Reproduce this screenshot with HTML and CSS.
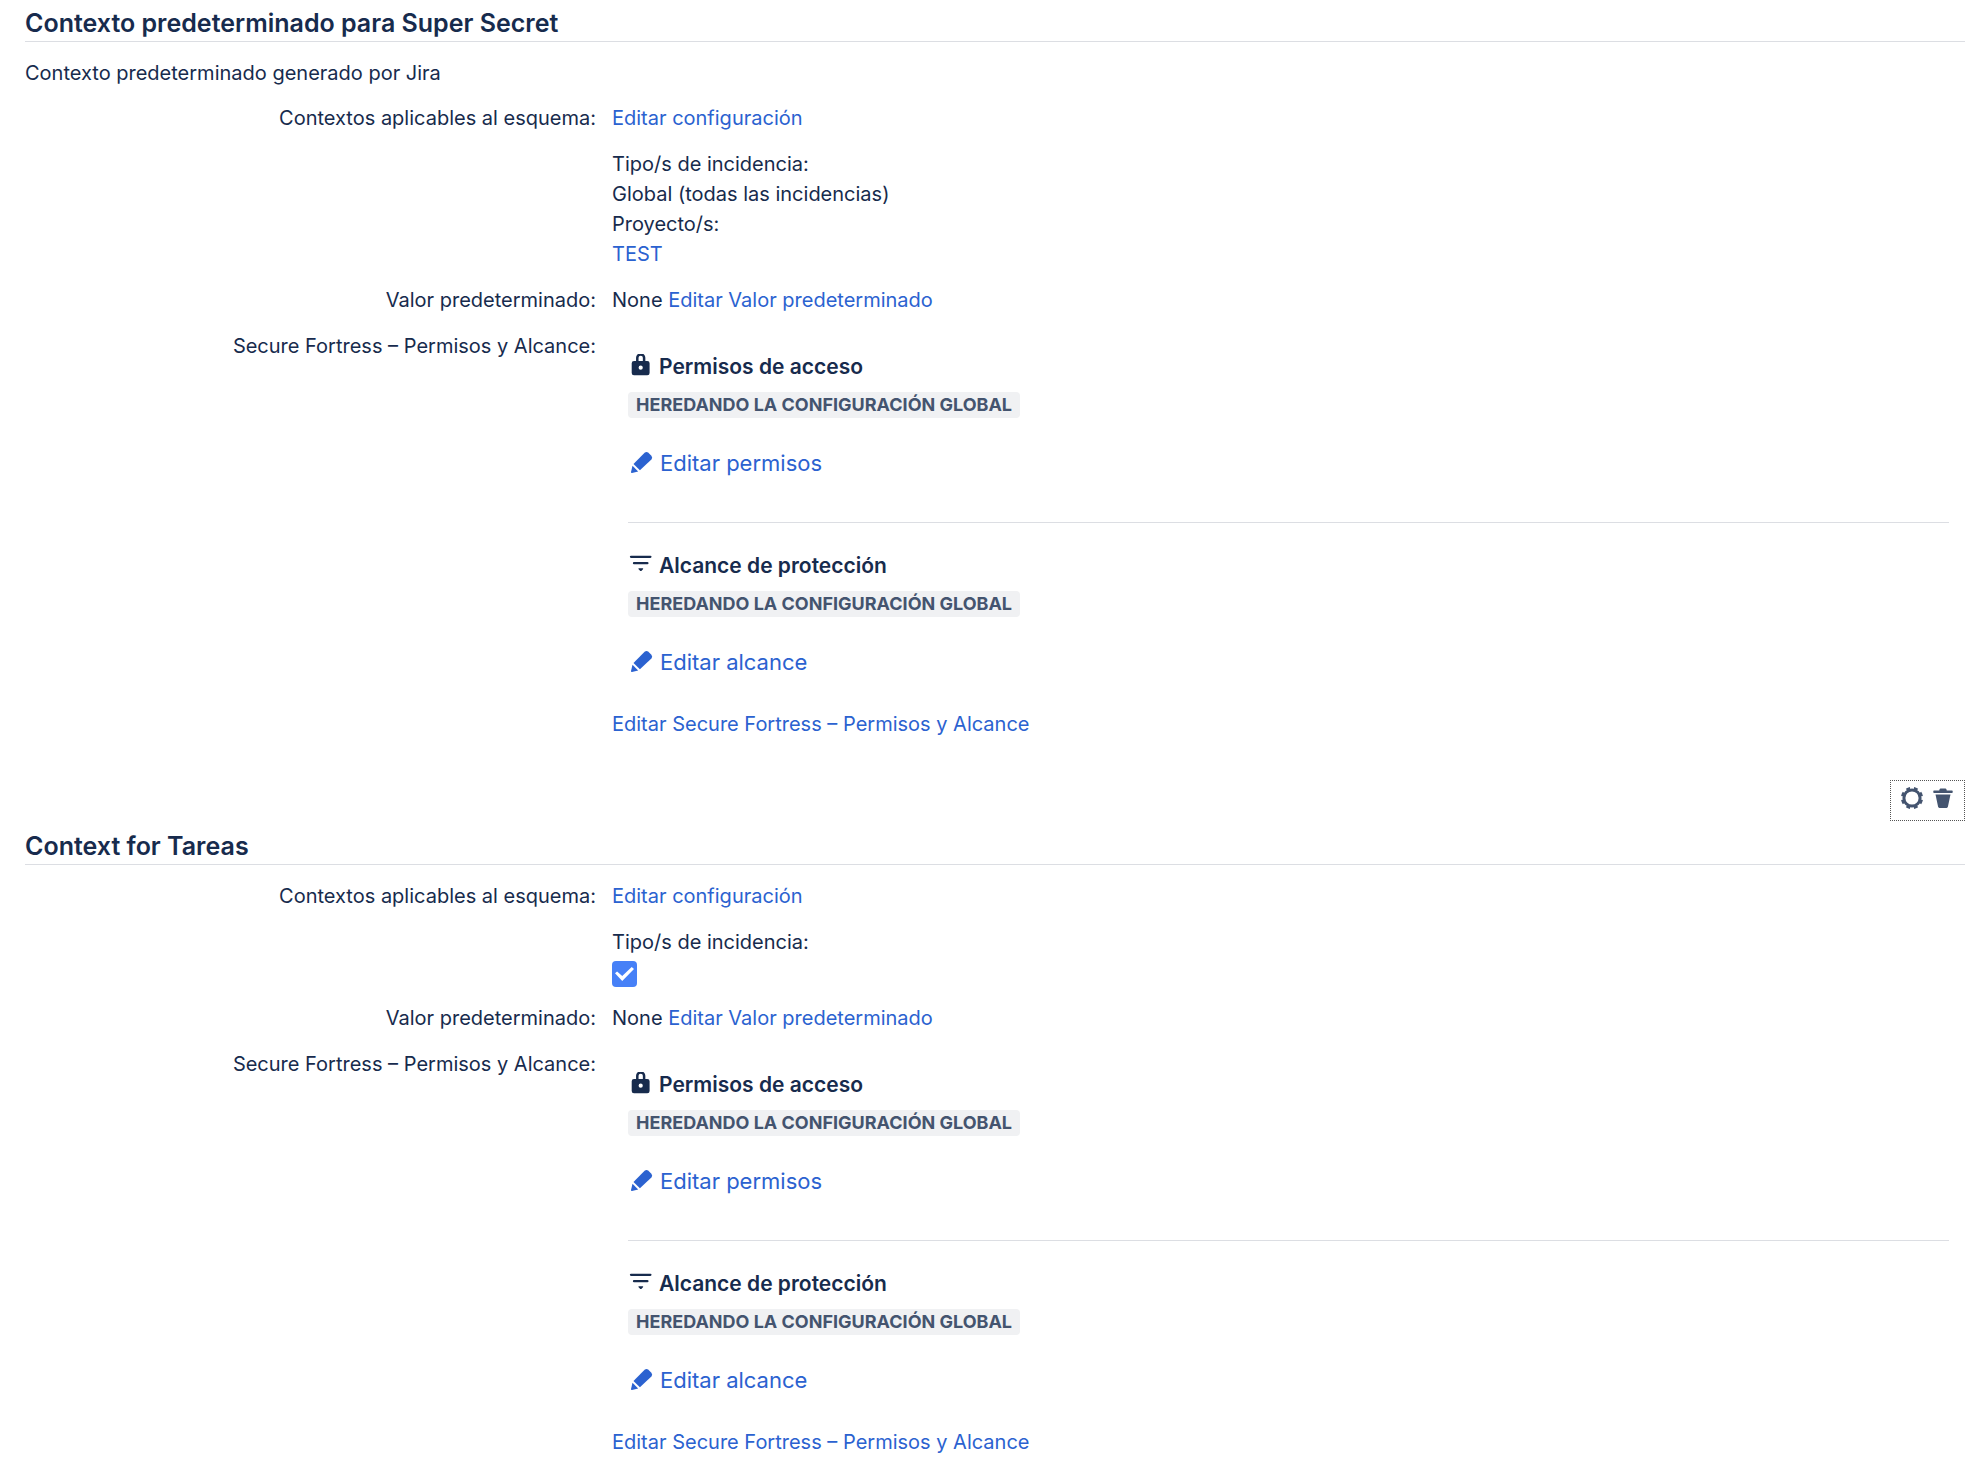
FILE: index.html
```html
<!DOCTYPE html>
<html lang="es">
<head>
    <title>Configurar campo personalizado</title>
    <meta charset="utf-8">
    <link rel="stylesheet" href="styles.css">
</head>
<body>
    <!-- shared icons -->
    <svg class="sprite" aria-hidden="true">
        <symbol id="lock" viewBox="0 1 26 26">
            <path d="M9.3 10V4.800a3.400 3.400 0 0 1 6.800 0V10" fill="none" stroke="currentColor" stroke-width="2.500"/>
            <path fill-rule="evenodd" d="M6 8h13.300a2.300 2.300 0 0 1 2.300 2.300V20a2.300 2.300 0 0 1-2.300 2.300H6A2.300 2.300 0 0 1 3.700 20v-9.700A2.300 2.300 0 0 1 6 8zm6.700 4.600a2.100 2.100 0 1 0 0 4.200 2.100 2.100 0 0 0 0-4.200z"/>
        </symbol>
        <symbol id="filter" viewBox="0 1 26 26">
            <path d="M3 4.800h19.400M6 11.200h13.400" stroke="currentColor" stroke-width="2.300" stroke-linecap="round"/>
            <path d="M10.900 16.300h3.800q.9.200.3.900L13.300 18.900q-.5.400-1 0L10.600 17.200q-.6-.7.300-.9z"/>
        </symbol>
        <symbol id="pencil" viewBox="0 0 26 26">
            <path d="M16.600 2.700q1.900-1.600 3.800 0l3 3q1.600 1.900 0 3.800L11.900 20.300l-6.400-6.400z"/>
            <path d="M4.500 15.700l5.700 5.800-6.200 1.500q-1.200.1-1-1z"/>
        </symbol>
        <symbol id="gear" viewBox="0 0 26 26">
            <circle cx="13" cy="13" r="8.100" fill="none" stroke="currentColor" stroke-width="3"/>
            <circle cx="13" cy="13" r="9.800" fill="none" stroke="currentColor" stroke-width="2.600" pathLength="80" stroke-dasharray="5 5" stroke-dashoffset="-2.500"/>
        </symbol>
        <symbol id="trash" viewBox="0 0 26 26">
            <path d="M10.500 3.400h5q.6 0 .8.600l.5 1.400h5.200q.7 0 .7.700v1.200q0 .7-.7.700H4q-.7 0-.7-.7V6.100q0-.7.700-.7h5.200L9.700 4q.2-.6.800-.6z"/>
            <path d="M5.500 9.500h15l-2.600 12.300q-.2 1.100-1.300 1.100H9.400q-1.100 0-1.300-1.100z"/>
        </symbol>
    </svg>

    <section class="context">
        <h3>Contexto predeterminado para Super Secret</h3>
        <p class="description">Contexto predeterminado generado por Jira</p>
        <dl>
            <dt>Contextos aplicables al esquema:</dt>
            <dd><a href="#">Editar configuración</a></dd>
            <dd>
                Tipo/s de incidencia:<br>
                Global (todas las incidencias)<br>
                Proyecto/s:<br>
                <a href="#">TEST</a>
            </dd>
            <dt>Valor predeterminado:</dt>
            <dd>None <a href="#">Editar Valor predeterminado</a></dd>
            <dt>Secure Fortress – Permisos y Alcance:</dt>
            <dd>
                <div class="panel">
                    <h4><svg class="icon"><use href="#lock"/></svg>Permisos de acceso</h4>
                    <span class="lozenge">Heredando la configuración global</span>
                    <a class="edit" href="#"><svg class="icon"><use href="#pencil"/></svg>Editar permisos</a>
                    <hr>
                    <h4><svg class="icon"><use href="#filter"/></svg>Alcance de protección</h4>
                    <span class="lozenge">Heredando la configuración global</span>
                    <a class="edit" href="#"><svg class="icon"><use href="#pencil"/></svg>Editar alcance</a>
                </div>
                <a href="#">Editar Secure Fortress – Permisos y Alcance</a>
            </dd>
        </dl>
    </section>

    <section class="context">
        <div class="operations">
            <button type="button" aria-label="Configurar"><svg class="icon"><use href="#gear"/></svg></button>
            <button type="button" aria-label="Eliminar"><svg class="icon"><use href="#trash"/></svg></button>
        </div>
        <h3>Context for Tareas</h3>
        <dl>
            <dt>Contextos aplicables al esquema:</dt>
            <dd><a href="#">Editar configuración</a></dd>
            <dd>
                <label for="issuetype">Tipo/s de incidencia:</label>
                <div class="types"><input type="checkbox" id="issuetype" checked></div>
            </dd>
            <dt>Valor predeterminado:</dt>
            <dd>None <a href="#">Editar Valor predeterminado</a></dd>
            <dt>Secure Fortress – Permisos y Alcance:</dt>
            <dd>
                <div class="panel">
                    <h4><svg class="icon"><use href="#lock"/></svg>Permisos de acceso</h4>
                    <span class="lozenge">Heredando la configuración global</span>
                    <a class="edit" href="#"><svg class="icon"><use href="#pencil"/></svg>Editar permisos</a>
                    <hr>
                    <h4><svg class="icon"><use href="#filter"/></svg>Alcance de protección</h4>
                    <span class="lozenge">Heredando la configuración global</span>
                    <a class="edit" href="#"><svg class="icon"><use href="#pencil"/></svg>Editar alcance</a>
                </div>
                <a href="#">Editar Secure Fortress – Permisos y Alcance</a>
            </dd>
        </dl>
    </section>
</body>
</html>
```
FILE: styles.css
```css
body{margin:0;padding:7px 19px 0 25px;background-color:#fff;color:#172b4d;font-family:Inter, "Liberation Sans", sans-serif;font-size:20px;line-height:30px;}
a{color:#2b62d0;text-decoration:none;}
a:hover{text-decoration:underline;}
.sprite{display:none;}
.icon{flex:none;display:block;width:26px;height:26px;fill:currentColor;overflow:visible;}

h3{margin:0 0 16px;padding-bottom:2px;border-bottom:1px solid #dcdee3;font-size:25px;font-weight:600;line-height:32px;}
.description{margin:0 0 15px;}

/* label column on the left, values on the right */
dl{display:grid;grid-template-columns:30% 1fr;column-gap:5px;row-gap:16px;margin:0;}
dt{grid-column:1;padding-right:11px;text-align:right;}
dd{grid-column:2;margin:0;}

.panel{display:flex;flex-direction:column;align-items:flex-start;padding:21px 16px 32px;}
h4{display:flex;align-items:center;gap:5px;margin:0 0 10px;font-size:21px;font-weight:600;}
.lozenge{padding:0 8px;border-radius:4px;background-color:#f0f1f3;color:#44546f;font-size:18px;font-weight:700;line-height:26px;text-transform:uppercase;}
.edit{display:flex;align-items:center;gap:6px;margin-top:30px;font-size:22px;}
hr{align-self:stretch;margin:44px 0 28px;border:0;border-top:1px solid #dcdee3;}

.operations{display:flex;gap:5px;width:fit-content;margin:41px 0 9px auto;padding:4px 8px 9px;border:1px dotted #555;color:#44546f;}
.operations button{padding:0;border:0;background:none;color:inherit;cursor:pointer;}

.types{display:flex;align-items:flex-end;height:30px;}
input[type=checkbox]{appearance:none;display:grid;place-items:center;width:25px;height:26px;margin:0;border-radius:4px;background-color:#4680f7;}
input[type=checkbox]:checked::after{content:"";width:19px;height:14px;background-color:#fff;clip-path:polygon(0 45%, 11% 32%, 38% 65%, 88% 0, 100% 14%, 38% 100%);}
```
